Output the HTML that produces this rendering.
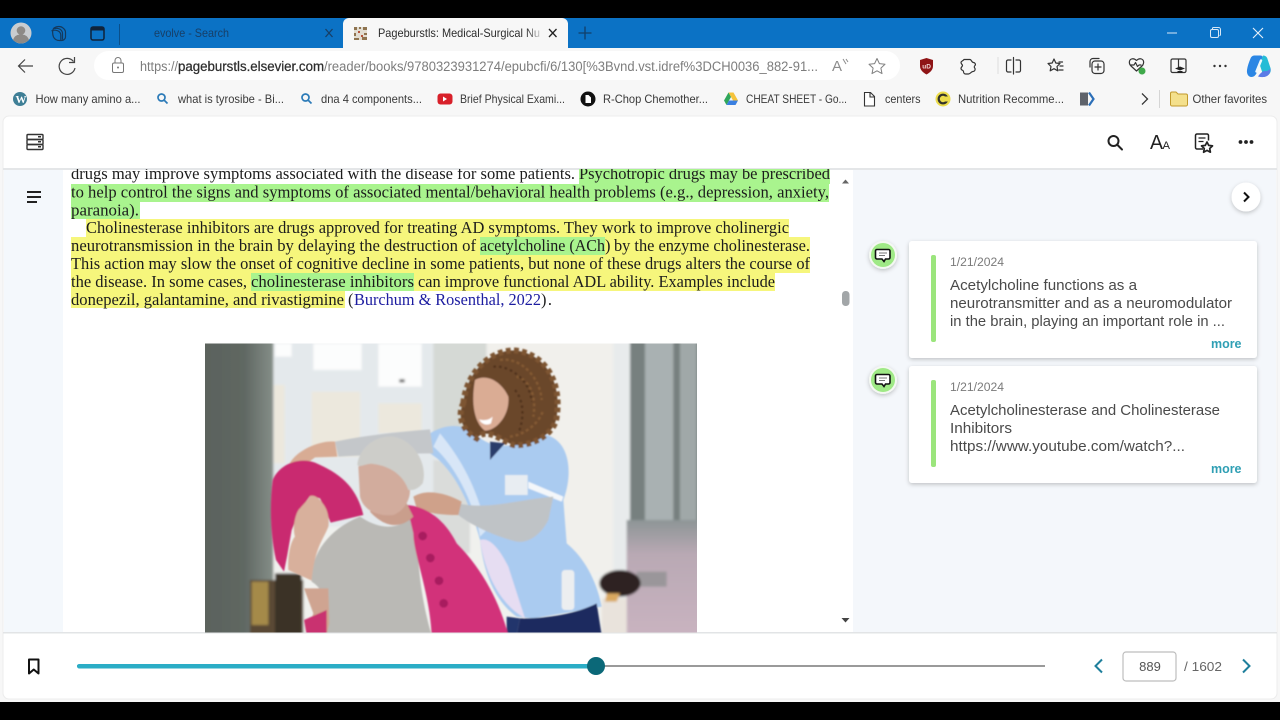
<!DOCTYPE html>
<html lang="en"><head><meta charset="utf-8"><title>Pageburst reader</title>
<style>
html,body{margin:0;padding:0;background:#000;width:1280px;height:720px;overflow:hidden}
svg{display:block}
text{font-family:"Liberation Sans",sans-serif;white-space:pre}
.s text{font-family:"Liberation Serif",serif;font-size:16.4px;fill:#1c1c1c}
.b{font-size:12px;fill:#3a3a3a}
.n{font-size:14.3px;fill:#4a4a4a}
.i{fill:none;stroke:#333;stroke-width:1.200;stroke-linecap:round;stroke-linejoin:round}
</style></head><body>
<svg width="1280" height="720" viewBox="0 0 1280 720" xmlns="http://www.w3.org/2000/svg">
<defs>
<filter id="bl" x="-5%" y="-5%" width="110%" height="110%"><feGaussianBlur stdDeviation="4"/></filter>
<filter id="bl3" x="-5%" y="-5%" width="110%" height="110%"><feGaussianBlur stdDeviation="2.500"/></filter>
<filter id="sh" x="-30%" y="-30%" width="160%" height="170%"><feDropShadow dx="0" dy="1.500" stdDeviation="2" flood-color="#000" flood-opacity=".22"/></filter>
<clipPath id="ph"><rect x="205" y="343.500" width="492" height="289"/></clipPath>
<clipPath id="body"><rect x="3" y="169" width="1274" height="463"/></clipPath>
<linearGradient id="fade" x1="0" x2="1"><stop offset="0" stop-color="#f7f7f7" stop-opacity="0"/><stop offset="1" stop-color="#f7f7f7"/></linearGradient>
<linearGradient id="door" x1="0" x2="1"><stop offset="0" stop-color="#5a625c"/><stop offset=".6" stop-color="#5f6762"/><stop offset="1" stop-color="#858e88"/></linearGradient>
<linearGradient id="pink" x1="0" x2="0" y1="0" y2="1"><stop offset="0" stop-color="#8d9596"/><stop offset=".3" stop-color="#b9a9b4"/><stop offset="1" stop-color="#c9b3c0"/></linearGradient>
</defs>

<rect width="1280" height="720" fill="#000"/>
<rect y="18" width="1280" height="30" fill="#0b72c5"/>
<rect y="48" width="1280" height="654" fill="#f7f7f7"/>

<!-- title bar -->
<circle cx="21" cy="33" r="10.500" fill="#c9cdd0"/>
<circle cx="21" cy="30.500" r="4.300" fill="#8d8a86"/>
<path d="M13 40c1.500-4.500 4.500-5.500 8-5.500s6.500 1 8 5.500c-2 2-5 3.500-8 3.500s-6-1.500-8-3.500z" fill="#8d8a86"/>
<g fill="none" stroke="#15395c" stroke-width="1.200">
<path d="M54 28c3-2 7-2 9 0 2 1.500 2.500 3 2.500 4.500V37c0 2-2 3.500-4 3.500h-2c-3 0-5-1.500-6-3.500-1-2.500-1.500-7 .5-9z"/>
<path d="M51.500 31c2-1.300 5.500-1 7.500.5 1.300 1 1.800 2.500 1.800 4v4.500"/><path d="M54 28.500c3-.5 5.500 0 7 1.500 1 1 1.500 2 1.500 3.500v6"/>
</g>
<rect x="91" y="27" width="13" height="13" rx="2" fill="#0b72c5" stroke="#10233a" stroke-width="1.500"/>
<rect x="91" y="27" width="13" height="3.500" fill="#10233a"/>
<rect x="119" y="24" width="1" height="21" fill="#0a4f8a"/>
<text x="154" y="37" font-size="11.800" fill="#173f67" textLength="75" lengthAdjust="spacingAndGlyphs">evolve - Search</text>
<path d="M325.500 29l7 8M332.500 29l-7 8" stroke="#173f67" stroke-width="1.300" fill="none"/>
<path d="M343 48v-24a6 6 0 0 1 6-6h213a6 6 0 0 1 6 6v24z" fill="#f7f7f7"/>
<rect x="354" y="27" width="13" height="13" fill="#e2ddd2"/>
<path d="M354 27h3v3h-3zM359 27h2v2h-2zM363 27h4v3h-4zM354 33h2v3h-2zM364 33h3v2h-3zM354 38h5v2h-5zM362 37h5v3h-5z" fill="#8f7450"/>
<path d="M358 31h2v2h-2zM361 35h2v2h-2z" fill="#b5533a"/>
<text x="378" y="37" font-size="11.800" fill="#2c2c2c" textLength="162" lengthAdjust="spacingAndGlyphs">Pageburstls: Medical-Surgical Nu</text>
<rect x="526" y="24" width="18" height="18" fill="url(#fade)"/>
<path d="M549 29l7.500 8M556.500 29l-7.500 8" stroke="#222" stroke-width="1.300" fill="none"/>
<path d="M585 26.500v13M578.500 33h13" stroke="#123f69" stroke-width="1.300" fill="none"/>
<path d="M1167 33h10" stroke="#d8e8f6" stroke-width="1"/>
<rect x="1210.500" y="29.500" width="8" height="8" rx="1.500" fill="none" stroke="#d8e8f6" stroke-width="1"/>
<path d="M1212.500 29.500v-1a1 1 0 0 1 1-1h5a2 2 0 0 1 2 2v5a1 1 0 0 1-1 1" fill="none" stroke="#d8e8f6" stroke-width="1"/>
<path d="M1253 28l10 10M1263 28l-10 10" stroke="#e8f2fa" stroke-width="1.100"/>

<!-- toolbar -->
<path d="M33 66H18.500M25 59.500L18.500 66l6.500 6.500" fill="none" stroke="#444" stroke-width="1.200"/>
<path d="M73.500 61.500A8 8 0 1 0 75 68" fill="none" stroke="#444" stroke-width="1.200"/>
<path d="M74.500 57v5.500H69" fill="none" stroke="#444" stroke-width="1.200"/>
<rect x="94" y="51" width="806" height="29" rx="14.500" fill="#fff"/>
<rect x="112.500" y="63" width="11" height="9.500" rx="1.500" fill="none" stroke="#777" stroke-width="1"/>
<path d="M115 63v-2.500a3 3 0 0 1 6 0V63" fill="none" stroke="#777" stroke-width="1"/>
<circle cx="118" cy="67.500" r="1" fill="#777"/>
<text x="140" y="71" font-size="13.400" fill="#7d7d7d" textLength="38" lengthAdjust="spacingAndGlyphs">https://</text>
<text x="178" y="71" font-size="13.400" fill="#2e2e2e" stroke="#2e2e2e" stroke-width=".25" textLength="146" lengthAdjust="spacingAndGlyphs">pageburstls.elsevier.com</text>
<text x="324" y="71" font-size="13.400" fill="#7d7d7d" textLength="494" lengthAdjust="spacingAndGlyphs">/reader/books/9780323931274/epubcfi/6/130[%3Bvnd.vst.idref%3DCH0036_882-91...</text>
<text x="832" y="71" font-size="15" fill="#8c8c8c">A</text>
<path d="M843 59l3 5M846 59l2 3" stroke="#8c8c8c" stroke-width="1" fill="none"/>
<path d="M877 58.500l2.400 5.100 5.600.7-4.100 3.800 1.100 5.500-5-2.800-5 2.800 1.100-5.500-4.100-3.800 5.600-.7z" fill="none" stroke="#808080" stroke-width="1" stroke-linejoin="round"/>

<path d="M920 60l6.500-2 6.500 2v6c0 4-3 6.500-6.500 8.500-3.500-2-6.500-4.500-6.500-8.500z" fill="#8f1416"/>
<text x="922.300" y="68.500" font-size="6.500" fill="#f2d8d8" font-weight="bold">uD</text>
<path d="M965 59.500h5c1.500 0 1.500 3 3.500 3 1.500 0 2.500 2 1.500 3-1.500 1.500-.5 2 0 3 .5 1.500-.5 3-2 3-2 0-2.500 2.500-4.500 2.500h-3c-1 0-2-1-2-2.500 0-1.500-2.500-1-2.500-3 0-1.500 1.500-2 1.500-3 0-1-1.500-1.500-1.500-3 0-1.500 2-1.500 3-3z" class="i"/>
<rect x="997.500" y="57" width="1" height="17" fill="#dcdcdc"/>
<path d="M1011 60h-3a1.500 1.500 0 0 0-1.500 1.500v9a1.500 1.500 0 0 0 1.500 1.500h3M1016 60h3a1.500 1.500 0 0 1 1.500 1.500v9a1.500 1.500 0 0 1-1.500 1.500h-3M1013.500 57.500v16.500" class="i"/>
<path d="M1054 59l1.800 4 4.200.5-3 3 .8 4.300-3.800-2.100-3.800 2.100.8-4.300-3-3 4.200-.5z" class="i"/><path d="M1059 62h3.500M1060 66h3M1059 70h4" class="i"/>
<rect x="1092" y="61" width="12" height="12.500" rx="3" class="i"/>
<path d="M1098 64v6M1095 67h6" class="i"/>
<path d="M1090 67v-5.500a3 3 0 0 1 3-3h6" class="i"/>
<path d="M1131 66c-2.500-2.500-2-6 .5-7 2-.8 3.500 0 5 1.500 1.500-1.500 3-2.300 5-1.500 2.500 1 3 4.500.5 7l-5.500 5z" class="i"/>
<path d="M1131 65h3l1.500-2.500 2 4 1.500-1.500h2" class="i" stroke-width="1"/>
<circle cx="1142" cy="71" r="3.500" fill="#3fa94a"/>
<rect x="1171" y="59" width="15" height="13.500" rx="1.500" fill="none" stroke="#333" stroke-width="1.200"/>
<path d="M1178.500 59v9" stroke="#333" stroke-width="1.200"/>
<path d="M1175 68.500l5-2 5 2-5 2z" fill="#222"/><path d="M1177.500 71h5v2h-5z" fill="#222"/>
<g fill="#333"><circle cx="1214.500" cy="66" r="1.200"/><circle cx="1220" cy="66" r="1.200"/><circle cx="1225.500" cy="66" r="1.200"/></g>
<!-- copilot -->
<path d="M1255 55.500h5.500c2 0 2.500 1.500 1.500 3.500l-5 13c-1 3-3 5-5.500 5-3 0-5-3-4.500-7 .5-4 2-8 3.500-11.500 1-2.500 2.500-3 4.500-3z" fill="#2b86e4"/>
<path d="M1263 55.500c2.500 0 4 1.500 4.500 3.500l3 9c1 4-1 7-4 7.500-2 .4-3.500-.5-4-2.500l-3-9z" fill="#25bcd6"/>
<path d="M1258 76.500c3 .8 6 .8 8 0 3-1 4.500-4 4.500-8-1.500 2-4 3-6.500 2.500-2.500 1-4.500 3-6 5.500z" fill="#5b7be6"/>
<path d="M1261 60.500l-4.500 11" stroke="#f0f8fb" stroke-width="2.400" stroke-linecap="round"/>

<!-- bookmarks -->
<circle cx="20" cy="99" r="7" fill="#3f7f96"/>
<text x="15.500" y="103" font-size="11" font-weight="bold" fill="#fff" style="font-family:'Liberation Serif',serif">W</text>
<g fill="none" stroke="#2c7bb8" stroke-width="1.700"><circle cx="161.500" cy="97.500" r="3.500"/><path d="M164 100l3.500 3.500"/><circle cx="305.500" cy="97.500" r="3.500"/><path d="M308 100l3.500 3.500"/></g>
<text class="b" x="35.500" y="103" textLength="105" lengthAdjust="spacingAndGlyphs">How many amino a...</text>
<text class="b" x="178" y="103" textLength="106" lengthAdjust="spacingAndGlyphs">what is tyrosibe - Bi...</text>
<text class="b" x="321" y="103" textLength="101" lengthAdjust="spacingAndGlyphs">dna 4 components...</text>
<rect x="437.500" y="93.500" width="15" height="11" rx="3" fill="#d8202a"/><path d="M443 96.500v5l4-2.500z" fill="#fff"/>
<text class="b" x="460" y="103" textLength="105" lengthAdjust="spacingAndGlyphs">Brief Physical Exami...</text>
<circle cx="588" cy="99" r="7.500" fill="#111"/><path d="M585.500 95h3l2.500 2.500V103h-5.500z" fill="#fff"/>
<text class="b" x="603" y="103" textLength="105" lengthAdjust="spacingAndGlyphs">R-Chop Chemother...</text>
<path d="M728.500 92.500h5l4.500 8h-5z" fill="#f5c33b"/><path d="M728.500 92.500l-4.500 8 2.500 4.500 4.500-8z" fill="#2fa65a"/><path d="M726.500 105h9l2.500-4.500h-9z" fill="#3a7fe0"/>
<text class="b" x="746" y="103" textLength="101" lengthAdjust="spacingAndGlyphs">CHEAT SHEET - Go...</text>
<path d="M864.500 92.500h6l4 4v9.500h-10zM870 92.500v4.500h4.500" fill="#fff" stroke="#333" stroke-width="1.100"/>
<text class="b" x="885" y="103" textLength="35.500" lengthAdjust="spacingAndGlyphs">centers</text>
<circle cx="943" cy="99" r="7.500" fill="#ecdc4a"/><circle cx="943" cy="99" r="4.300" fill="none" stroke="#33332a" stroke-width="2.200"/><rect x="945" y="96.500" width="4" height="5" fill="#ecdc4a"/>
<text class="b" x="958" y="103" textLength="106" lengthAdjust="spacingAndGlyphs">Nutrition Recomme...</text>
<rect x="1080" y="92.500" width="8" height="13" fill="#5f636b"/><path d="M1089 92.500l4.500 6.500-4.500 6.500" fill="none" stroke="#2c6fb8" stroke-width="2.200"/>
<path d="M1142 93.500l5.500 5.500-5.500 5.500" fill="none" stroke="#333" stroke-width="1.300"/>
<rect x="1159" y="90" width="1" height="18" fill="#d5d5d5"/>
<path d="M1170.500 93.500a1.500 1.500 0 0 1 1.500-1.500h4l2 2h8a1.500 1.500 0 0 1 1.500 1.500v9a1.500 1.500 0 0 1-1.500 1.500h-14a1.500 1.500 0 0 1-1.500-1.500z" fill="#f4e08c" stroke="#c29a2c" stroke-width="1"/>
<text class="b" x="1192.500" y="103" textLength="74.500" lengthAdjust="spacingAndGlyphs">Other favorites</text>

<!-- page card -->
<rect x="3" y="116" width="1274" height="583" rx="6" fill="#fff" stroke="#ececec" stroke-width="1"/>
<rect x="3" y="168" width="1274" height="2" fill="#e4e6e8"/>
<rect x="4" y="170" width="59" height="462" fill="#f4f8fc"/>
<rect x="853" y="170" width="423" height="462" fill="#f4f7fb"/>
<rect x="3" y="632" width="1274" height="1.500" fill="#e2e4e6"/>

<!-- header icons -->
<g fill="none" stroke="#333" stroke-width="1.400">
<rect x="27" y="134.500" width="16" height="5" rx="1"/><rect x="27" y="139.500" width="16" height="5" rx="1"/><rect x="27" y="144.500" width="16" height="5" rx="1"/>
</g>
<g fill="#333"><rect x="38" y="136" width="3" height="1.500"/><rect x="38" y="141" width="3" height="1.500"/><rect x="38" y="146" width="3" height="1.500"/></g>
<g fill="none" stroke="#222" stroke-width="2"><circle cx="1113.500" cy="141" r="5"/><path d="M1117.500 145l4.500 4.500" stroke-linecap="round"/></g>
<text x="1150" y="149" font-size="20" fill="#222" textLength="13" lengthAdjust="spacingAndGlyphs">A</text>
<text x="1162.500" y="149" font-size="11" fill="#222" textLength="7.500" lengthAdjust="spacingAndGlyphs">A</text>
<path d="M1203 149h-6a1.500 1.500 0 0 1-1.500-1.500v-12a1.500 1.500 0 0 1 1.500-1.500h10a1.500 1.500 0 0 1 1.500 1.500v5" fill="none" stroke="#222" stroke-width="1.500"/>
<path d="M1198.500 138h7M1198.500 141.500h5" stroke="#222" stroke-width="1.200"/>
<path d="M1207 142l1.700 3.400 3.800.5-2.800 2.600.7 3.700-3.400-1.800-3.400 1.800.7-3.700-2.800-2.600 3.800-.5z" fill="none" stroke="#222" stroke-width="1.700" stroke-linejoin="round"/>
<g fill="#222"><circle cx="1240.500" cy="142" r="1.900"/><circle cx="1246" cy="142" r="1.900"/><circle cx="1251.500" cy="142" r="1.900"/></g>
<g fill="#222"><rect x="27" y="191" width="14" height="2"/><rect x="27" y="196" width="14" height="2"/><rect x="27" y="201" width="10" height="2"/></g>

<!-- highlights -->
<g clip-path="url(#body)">
<g fill="#a9f48e">
<rect x="579" y="165" width="251" height="19"/><rect x="71" y="184" width="758" height="18"/><rect x="71" y="202" width="69" height="17"/>
</g>
<g fill="#f6f67c">
<rect x="86" y="219" width="703" height="18"/><rect x="71" y="237" width="739" height="18"/><rect x="71" y="255" width="739" height="18"/><rect x="71" y="273" width="704" height="18"/><rect x="71" y="291" width="274" height="17"/>
</g>
<g fill="#a9f48e"><rect x="480" y="237" width="125" height="18"/><rect x="251" y="273" width="163" height="18"/></g>
<g class="s">
<text x="71" y="179" textLength="504" lengthAdjust="spacingAndGlyphs">drugs may improve symptoms associated with the disease for some patients.</text>
<text x="579" y="179" textLength="251" lengthAdjust="spacingAndGlyphs">Psychotropic drugs may be prescribed</text>
<text x="71" y="197.600" textLength="758" lengthAdjust="spacingAndGlyphs">to help control the signs and symptoms of associated mental/behavioral health problems (e.g., depression, anxiety,</text>
<text x="71" y="215.600" textLength="68" lengthAdjust="spacingAndGlyphs">paranoia).</text>
<text x="86" y="233" textLength="703" lengthAdjust="spacingAndGlyphs">Cholinesterase inhibitors are drugs approved for treating AD symptoms. They work to improve cholinergic</text>
<text x="71" y="251" textLength="405" lengthAdjust="spacingAndGlyphs">neurotransmission in the brain by delaying the destruction of</text>
<text x="480" y="251" textLength="125" lengthAdjust="spacingAndGlyphs">acetylcholine (ACh</text>
<text x="605" y="251">)</text>
<text x="614" y="251" textLength="196" lengthAdjust="spacingAndGlyphs">by the enzyme cholinesterase.</text>
<text x="71" y="269" textLength="739" lengthAdjust="spacingAndGlyphs">This action may slow the onset of cognitive decline in some patients, but none of these drugs alters the course of</text>
<text x="71" y="287" textLength="176" lengthAdjust="spacingAndGlyphs">the disease. In some cases,</text>
<text x="251" y="287" textLength="163" lengthAdjust="spacingAndGlyphs">cholinesterase inhibitors</text>
<text x="418" y="287" textLength="357" lengthAdjust="spacingAndGlyphs">can improve functional ADL ability. Examples include</text>
<text x="71" y="305" textLength="273" lengthAdjust="spacingAndGlyphs">donepezil, galantamine, and rivastigmine</text>
<text x="348" y="305">(</text>
<text x="354" y="305" textLength="187" lengthAdjust="spacingAndGlyphs" style="fill:#1c1ca0">Burchum &amp; Rosenthal, 2022</text>
<text x="541" y="305" textLength="11">).</text>
</g>
</g>

<!-- photo -->
<g clip-path="url(#ph)">
<g transform="translate(200 340) scale(.33333)">
<g filter="url(#bl)">
<rect x="0" y="0" width="1500" height="885" fill="#f0f1ee"/>
<!-- window -->
<rect x="220" y="0" width="490" height="560" fill="#e4e9ec"/>
<g fill="#fcfdfd"><rect x="225" y="10" width="50" height="40"/><rect x="340" y="10" width="145" height="80"/><rect x="535" y="10" width="130" height="130"/></g>
<g fill="#ece8dd"><rect x="222" y="135" width="32" height="235"/><rect x="335" y="155" width="145" height="195"/><rect x="535" y="190" width="130" height="90"/></g>
<rect x="598" y="118" width="16" height="9" fill="#555"/>
<!-- curtain -->
<rect x="700" y="0" width="160" height="280" fill="#d5d9d5"/>
<rect x="700" y="360" width="110" height="280" fill="#dadcda"/>
<!-- wall -->
<rect x="860" y="0" width="420" height="700" fill="#f1f0ec"/>
<rect x="1240" y="0" width="50" height="885" fill="#e8ebec"/>
<!-- right door -->
<rect x="1290" y="0" width="210" height="885" fill="#77807f"/>
<rect x="1335" y="0" width="85" height="600" fill="#a9b1b2"/>
<rect x="1440" y="0" width="50" height="600" fill="#a0a8a8"/>
<rect x="1280" y="540" width="220" height="345" fill="url(#pink)"/>
<rect x="1310" y="695" width="90" height="45" fill="#9a969a"/>
<!-- left door -->
<rect x="0" y="0" width="220" height="885" fill="url(#door)"/>
<rect x="150" y="720" width="160" height="165" fill="#5a4a34"/>
<rect x="155" y="725" width="50" height="130" fill="#a58a4a"/>
<rect x="225" y="700" width="80" height="185" fill="#3a3026"/>
<!-- objects right -->
<ellipse cx="1260" cy="730" rx="62" ry="40" fill="#2e2421"/>
<rect x="1205" y="775" width="75" height="110" fill="#e9e3dc"/>
<path d="M1220 760h40l-10 25h-35z" fill="#d9a860"/>
</g>
<g filter="url(#bl3)">
<!-- nurse uniform -->
<path d="M690 280C740 250 790 250 830 285 880 335 960 320 1040 285 1110 305 1120 400 1090 480L1100 610C1150 650 1190 720 1205 800L1000 835 950 830C880 780 850 690 840 600 800 450 740 370 690 340z" fill="#aacbf0"/>
<path d="M840 600C870 590 900 630 925 680L975 835C915 800 860 730 840 600z" fill="#e6ddf2"/>
<path d="M720 280C770 340 830 430 860 570L840 590C820 480 760 370 700 320z" fill="#d8e6f7"/>
<path d="M960 835C1050 835 1130 820 1190 790L1205 885H950z" fill="#1e2c5e"/>
<path d="M920 830l40 5-10 50h-30z" fill="#24356c"/>
<!-- nurse back arm -->
<path d="M405 305C500 285 600 275 690 268L700 340C600 340 500 345 415 350z" fill="#c4c7ca"/>
<path d="M268 372C290 330 360 300 405 305L412 350 345 352 295 390z" fill="#d8ac94"/>
<!-- hair: base with curly edge and soft strands -->
<path d="M790 190C800 90 880 25 950 32 1040 45 1085 130 1070 230 1065 280 1000 320 940 315 900 300 860 260 830 295 790 275 770 230 790 190z" fill="#6b4629" stroke="#7d5430" stroke-width="18" stroke-dasharray="14 10"/>
<g fill="none" stroke="#8a5f36" stroke-width="7" stroke-dasharray="9 8" opacity=".8"><path d="M900 60c60-10 120 50 125 120"/><path d="M950 110c40 10 60 60 50 120"/><path d="M930 290c40-5 85-35 100-80"/></g>
<g fill="none" stroke="#4a2f1c" stroke-width="7" stroke-dasharray="8 9" opacity=".8"><path d="M880 80c50-5 110 40 115 105"/><path d="M945 150c25 30 30 80 10 130"/></g>
<path d="M825 120C860 100 905 125 925 170 930 225 890 272 855 272 830 255 810 205 825 120z" fill="#daac94"/>
<path d="M838 238c15 5 30 2 40-8l-5 20c-12 8-30 2-35-12z" fill="#fff"/>
<path d="M870 305l45 5-45 50z" fill="#2a3c6a"/>
<!-- pocket + trim -->
<rect x="915" y="405" width="68" height="60" fill="#e8edf2"/>
<path d="M985 425l105 45-5 15-100-40z" fill="#f4f7fa"/>
<!-- grey sleeve -->
<path d="M775 490C860 510 950 480 1060 470L1045 540C1020 590 980 610 950 605 890 590 820 560 775 525z" fill="#bfc3c6"/>
<path d="M640 470C680 445 740 460 785 485L775 525C730 525 680 520 650 505z" fill="#cfa18a"/>
<!-- bottle -->
<rect x="1085" y="690" width="38" height="120" rx="10" fill="#eceef0"/>
<!-- old woman top -->
<path d="M480 530C540 570 590 570 640 530 660 560 640 700 695 885H380C388 800 375 750 335 725 330 650 380 570 480 530z" fill="#bab9b5"/>
<!-- pink sleeve -->
<path d="M218 420C240 370 300 350 345 368 420 400 470 440 490 525L392 548 360 475 330 468 300 510 275 570 262 645 252 695 228 660C212 590 208 500 218 420z" fill="#c92c6f"/>
<!-- raised hand and arm -->
<path d="M330 468C345 462 362 480 368 490 385 510 388 540 385 560 370 600 345 620 335 722L265 690C262 640 275 600 285 590 275 560 290 510 300 505 312 490 325 480 330 468z" fill="#d8b09c"/>
<path d="M312 745L385 745 388 850 380 885H318L340 820z" fill="#cfa491"/>
<path d="M312 840l68-30v75h-60z" fill="#c9306f"/>
<!-- cardigan -->
<path d="M620 495C670 498 730 530 770 610 850 690 900 790 925 885H695C690 760 640 640 640 580z" fill="#d2307a"/>
<!-- neck + face -->
<path d="M510 515C550 560 600 570 640 530L620 490 530 490z" fill="#c99e8c"/>
<path d="M475 380C520 350 590 370 625 430 640 460 620 510 580 525 530 530 490 510 480 470z" fill="#d2ac9d"/>
<path d="M472 375C478 320 530 285 580 290 640 300 685 370 668 430 650 450 640 450 625 450 610 405 570 378 520 372 500 368 480 385 472 375z" fill="#cdcdc9"/>
<g fill="#a81e5e"><circle cx="668" cy="588" r="13"/><circle cx="691" cy="654" r="13"/><circle cx="717" cy="722" r="13"/><circle cx="731" cy="790" r="13"/></g>
</g>
</g>
</g>

<!-- scrollbar -->
<path d="M842 183.500l3.500-4 3.500 4z" fill="#666"/>
<rect x="842" y="291" width="7.500" height="15" rx="3.500" fill="#a2a6a8"/>
<path d="M841.500 618h8l-4 4.500z" fill="#444"/>

<!-- right panel -->
<circle cx="1246" cy="197" r="14.500" fill="#fff" filter="url(#sh)"/>
<path d="M1244 192.500l4.500 4.500-4.500 4.500" fill="none" stroke="#111" stroke-width="2"/>

<g>
<rect x="909" y="241" width="348" height="117" rx="3" fill="#fff" filter="url(#sh)"/>
<rect x="931" y="255" width="5" height="87" rx="2" fill="#9be57c"/>
<text x="950" y="266" font-size="11.500" fill="#7a7a7a" textLength="54" lengthAdjust="spacingAndGlyphs">1/21/2024</text>
<text class="n" x="950" y="290" textLength="187" lengthAdjust="spacingAndGlyphs">Acetylcholine functions as a</text>
<text class="n" x="950" y="308" textLength="282" lengthAdjust="spacingAndGlyphs">neurotransmitter and as a neuromodulator</text>
<text class="n" x="950" y="326" textLength="275" lengthAdjust="spacingAndGlyphs">in the brain, playing an important role in ...</text>
<text x="1211" y="348" font-size="13" font-weight="bold" fill="#2f9fb4" textLength="30.500" lengthAdjust="spacingAndGlyphs">more</text>

<rect x="909" y="366" width="348" height="117" rx="3" fill="#fff" filter="url(#sh)"/>
<rect x="931" y="380" width="5" height="87" rx="2" fill="#9be57c"/>
<text x="950" y="391" font-size="11.500" fill="#7a7a7a" textLength="54" lengthAdjust="spacingAndGlyphs">1/21/2024</text>
<text class="n" x="950" y="415" textLength="270" lengthAdjust="spacingAndGlyphs">Acetylcholinesterase and Cholinesterase</text>
<text class="n" x="950" y="433" textLength="62" lengthAdjust="spacingAndGlyphs">Inhibitors</text>
<text class="n" x="950" y="451" textLength="235" lengthAdjust="spacingAndGlyphs">https://www.youtube.com/watch?...</text>
<text x="1211" y="473" font-size="13" font-weight="bold" fill="#2f9fb4" textLength="30.500" lengthAdjust="spacingAndGlyphs">more</text>
</g>

<g>
<circle cx="883" cy="255" r="14" fill="#f4f8f2" filter="url(#sh)"/>
<circle cx="883" cy="255" r="12" fill="#9fe986"/>
<path d="M877.500 249.500h11a1.500 1.500 0 0 1 1.500 1.500v6.500a1.500 1.500 0 0 1-1.500 1.500h-3l-1.500 2.500-2-2.500h-5a1.500 1.500 0 0 1-1.500-1.500V251a1.500 1.500 0 0 1 1.500-1.500z" fill="#fff" stroke="#111" stroke-width="1.600"/>
<path d="M879 253h8M879 255.500h6" stroke="#777" stroke-width="1"/>
</g>
<g>
<circle cx="883" cy="380" r="14" fill="#f4f8f2" filter="url(#sh)"/>
<circle cx="883" cy="380" r="12" fill="#9fe986"/>
<path d="M877.500 374.500h11a1.500 1.500 0 0 1 1.500 1.500v6.500a1.500 1.500 0 0 1-1.500 1.500h-3l-1.500 2.500-2-2.500h-5a1.500 1.500 0 0 1-1.500-1.500V376a1.500 1.500 0 0 1 1.500-1.500z" fill="#fff" stroke="#111" stroke-width="1.600"/>
<path d="M879 378h8M879 380.500h6" stroke="#777" stroke-width="1"/>
</g>

<!-- footer -->
<path d="M29 659.500h9.500V673.500l-4.750-4-4.750 4z" fill="none" stroke="#111" stroke-width="2" stroke-linejoin="round"/>
<rect x="77" y="665" width="968" height="2" fill="#9a9a9a"/>
<rect x="77" y="664" width="519" height="4.500" rx="2.200" fill="#2badc6"/>
<circle cx="596" cy="666" r="9" fill="#0b6878"/>
<path d="M1102 659.500l-6.500 6.500 6.500 6.500" fill="none" stroke="#1f7f9c" stroke-width="2"/>
<rect x="1123" y="652" width="53" height="29" rx="3" fill="#fff" stroke="#bdbdbd" stroke-width="1.200"/>
<text x="1150" y="671" font-size="13" fill="#555" text-anchor="middle">889</text>
<text x="1184" y="671" font-size="13" fill="#666" textLength="38" lengthAdjust="spacingAndGlyphs">/ 1602</text>
<path d="M1243 659.500l6.500 6.500-6.500 6.500" fill="none" stroke="#1f7f9c" stroke-width="2"/>
</svg>
</body></html>
